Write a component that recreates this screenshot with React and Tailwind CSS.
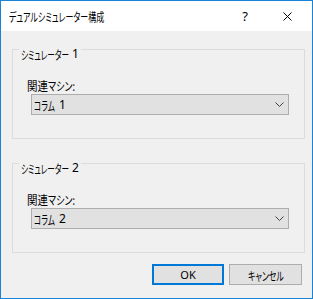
import React from "react";

const jp = "font-['Noto_Sans_CJK_JP','Noto_Sans',sans-serif] [font-feature-settings:'palt'] text-[12px] leading-[16px] text-black whitespace-nowrap";
const lat = "font-['Noto_Sans',sans-serif] text-[12px] leading-[16px] text-black";

function Sq({ box, scale, children }) {
  return (
    <span className={`inline-block shrink-0 ${box}`}>
      <span className={`inline-block origin-left ${scale} ${jp}`}>{children}</span>
    </span>
  );
}

function Chevron() {
  return (
    <svg width="9" height="5" viewBox="0 0 9 5" className="block">
      <path d="M0.5 0.5 L4.5 4.5 L8.5 0.5" fill="none" stroke="#404040" strokeWidth="1" />
    </svg>
  );
}

function Group({ num }) {
  return (
    <div className="relative h-[90px] border border-[#dcdcdc] pl-[14px] pr-[15px] pt-[23px]">
      <span className="absolute left-[6px] top-[-8px] flex items-center bg-[#f0f0f0] px-[2px]">
        <Sq box="w-[48px]" scale="scale-x-[0.635]">シミュレーター</Sq>
        <span className={`ml-[3px] ${lat}`}>{num}</span>
      </span>
      <div className="flex h-[16px]">
        <Sq box="w-[21px]" scale="scale-x-[0.875]">関連</Sq>
        <Sq box="w-[27px]" scale="scale-x-[0.75]">マシン:</Sq>
      </div>
      <div className="ml-[4px] mt-[5px] flex h-[21px] items-center justify-between border border-[#adadad] bg-[#e1e1e1] pl-[2px] pr-[4px]">
        <span className="flex items-center">
          <Sq box="w-[21px]" scale="scale-x-[0.64]">コラム</Sq>
          <span className={`ml-[4px] ${lat}`}>{num}</span>
        </span>
        <Chevron />
      </div>
    </div>
  );
}

export default function App() {
  return (
    <div className="flex h-[299px] w-[313px] flex-col border border-[#1883d7] bg-[#f0f0f0]">
      <div className="flex h-[30px] items-center bg-white pl-[8px]">
        <span className="flex flex-1">
          <Sq box="w-[96px]" scale="scale-x-[0.665]">デュアルシミュレーター構成</Sq>
        </span>
        <span className="mr-[34px] inline-block w-[8px] text-center font-['Noto_Sans',sans-serif] text-[13px] leading-[16px] text-black">?</span>
        <svg width="9" height="9" viewBox="0 0 9 9" className="mr-[20px] block">
          <path d="M0.5 0.5 L8.5 8.5 M8.5 0.5 L0.5 8.5" stroke="#000" strokeWidth="1" />
        </svg>
      </div>
      <div className="flex flex-1 flex-col pl-[11px] pr-[7px] pt-[18px]">
        <Group num="1" />
        <div className="h-[24px]" />
        <Group num="2" />
        <div className="mt-[11px] flex justify-end gap-[5px] pr-[3px]">
          <button className="flex h-[21px] w-[72px] items-center justify-center border-2 border-[#0078d7] bg-[#e1e1e1] font-['Noto_Sans',sans-serif] text-[11px] leading-[16px] text-black">
            OK
          </button>
          <button className="flex h-[21px] w-[73px] items-center justify-center border border-[#adadad] bg-[#e1e1e1]">
            <Sq box="w-[36px]" scale="scale-x-[0.66]">キャンセル</Sq>
          </button>
        </div>
      </div>
    </div>
  );
}
